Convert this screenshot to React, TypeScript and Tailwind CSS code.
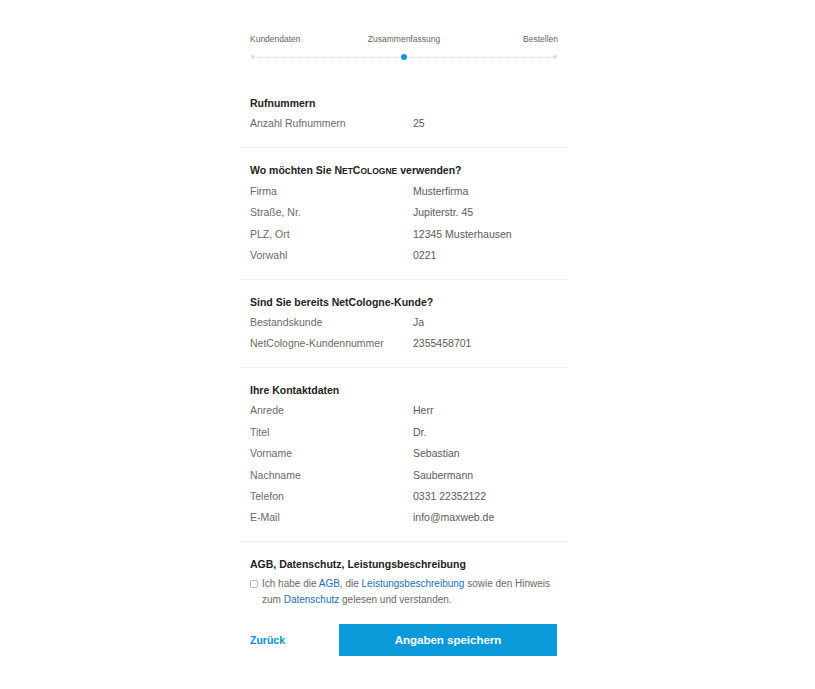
import React from "react";

type Row = [string, string];

interface Section {
  title: React.ReactNode;
  rows: Row[];
}

const SECTIONS: Section[] = [
  { title: "Rufnummern", rows: [["Anzahl Rufnummern", "25"]] },
  {
    title: (
      <>
        Wo möchten Sie N<span className="text-[8.5px]">ET</span>C
        <span className="text-[8.5px]">OLOGNE</span> verwenden?
      </>
    ),
    rows: [
      ["Firma", "Musterfirma"],
      ["Straße, Nr.", "Jupiterstr. 45"],
      ["PLZ, Ort", "12345 Musterhausen"],
      ["Vorwahl", "0221"],
    ],
  },
  {
    title: "Sind Sie bereits NetCologne-Kunde?",
    rows: [
      ["Bestandskunde", "Ja"],
      ["NetCologne-Kundennummer", "2355458701"],
    ],
  },
  {
    title: "Ihre Kontaktdaten",
    rows: [
      ["Anrede", "Herr"],
      ["Titel", "Dr."],
      ["Vorname", "Sebastian"],
      ["Nachname", "Saubermann"],
      ["Telefon", "0331 22352122"],
      ["E-Mail", "info@maxweb.de"],
    ],
  },
];

function Stepper() {
  return (
    <div className="px-[10px] pt-[33px]">
      <div className="grid grid-cols-3 text-[8.5px] leading-[12px] text-[#666]">
        <span className="text-left">Kundendaten</span>
        <span className="text-center">Zusammenfassung</span>
        <span className="text-right">Bestellen</span>
      </div>
      <div className="relative mt-[6px] flex h-[12px] items-center justify-between">
        <div className="absolute left-[3px] right-[3px] top-1/2 border-t border-dotted border-[#dcdcdc]" />
        <span className="relative ml-[1px] h-[4px] w-[4px] rounded-full bg-[#dedede]" />
        <span className="relative h-[6px] w-[6px] rounded-full bg-[#0a98d8]" />
        <span className="relative mr-[1px] h-[4px] w-[4px] rounded-full bg-[#dedede]" />
      </div>
    </div>
  );
}

function SummarySection({ section, first }: { section: Section; first: boolean }) {
  return (
    <div className={`${first ? "" : "border-t border-[#eeeeee]"} px-[10px] pt-[12px] pb-[12.5px]`}>
      <h3 className="text-[10.5px] font-bold leading-[20px] text-[#222]">{section.title}</h3>
      {section.rows.map(([label, value]) => (
        <div key={label} className="flex text-[10.5px] leading-[21.4px] text-[#6a6a6a]">
          <span className="w-[163px] shrink-0">{label}</span>
          <span className="text-[#5a5a5a]">{value}</span>
        </div>
      ))}
    </div>
  );
}

export default function App() {
  const link = "text-[#1d6fb8]";
  return (
    <div className="min-h-[689px] w-full bg-white font-['Liberation_Sans',Arial,sans-serif]">
      <div className="ml-[240px] w-[328px]">
        <Stepper />
        <div className="mt-[18px]">
          {SECTIONS.map((s, i) => (
            <SummarySection key={i} section={s} first={i === 0} />
          ))}
        </div>

        <div className="border-t border-[#eeeeee] px-[10px] pt-[14px]">
          <h3 className="text-[10.5px] font-bold leading-[17px] text-[#222]">
            AGB, Datenschutz, Leistungsbeschreibung
          </h3>
          <label className="mt-[3px] flex items-start gap-[4px] text-[10px] leading-[16px] text-[#6a6a6a]">
            <input
              type="checkbox"
              className="mt-[4px] h-[8px] w-[8px] shrink-0 appearance-none rounded-[2px] border border-[#b8b8b8] bg-white"
            />
            <p>
              <span>Ich habe die</span> <a className={link}>AGB</a>
              <span>, die</span> <a className={link}>Leistungsbeschreibung</a>{" "}
              <span>sowie den Hinweis</span> <span>zum</span> <a className={link}>Datenschutz</a>{" "}
              <span>gelesen und verstanden.</span>
            </p>
          </label>
        </div>

        <div className="mt-[16px] flex items-center pl-[10px] pr-[11px]">
          <button type="button" className="w-[89px] pt-[2px] text-left text-[10.5px] font-bold text-[#0a8fd6]">
            Zurück
          </button>
          <button
            type="button"
            className="h-[32px] flex-1 bg-[#0a9ada] text-[11.5px] font-bold text-white"
          >
            Angaben speichern
          </button>
        </div>
      </div>
    </div>
  );
}
